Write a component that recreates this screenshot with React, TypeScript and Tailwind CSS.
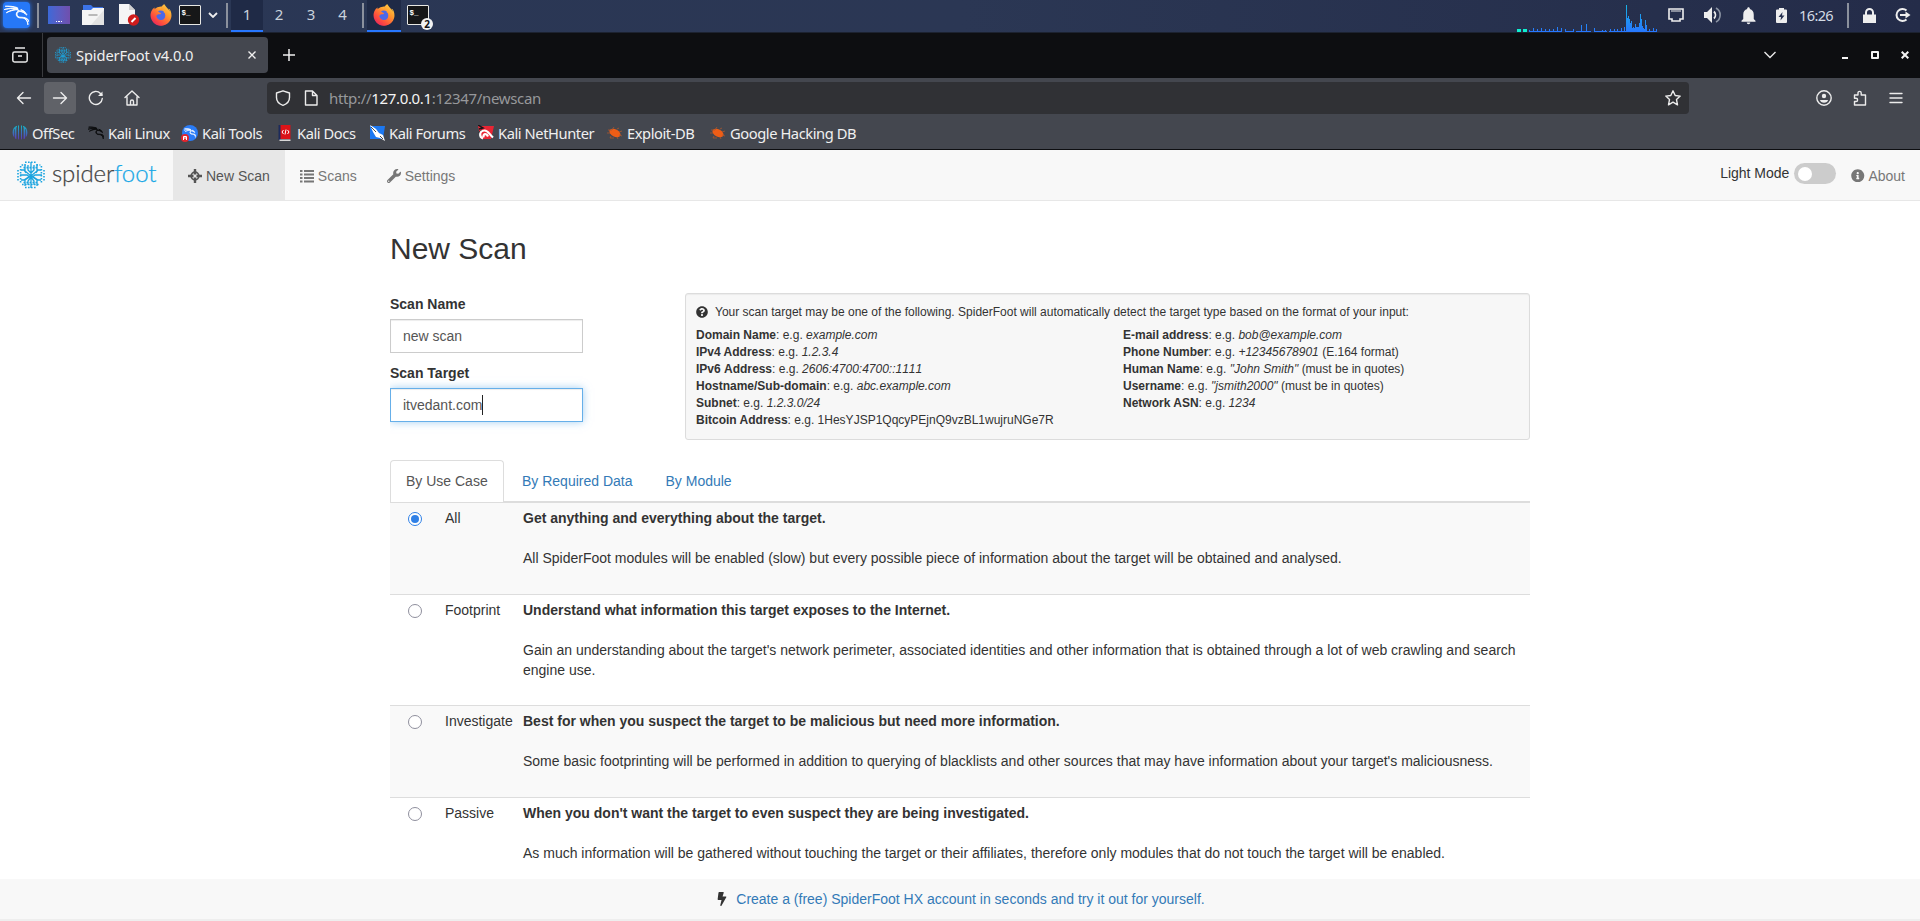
import type { ReactNode } from "react";
import { FaBolt, FaFirefoxBrowser, FaInfoCircle, FaQuestionCircle, FaWrench } from "react-icons/fa";
import { MdNotifications } from "react-icons/md";
import { SiKalilinux } from "react-icons/si";

const bookmarks = [
  { name: "OffSec", icon: "offsec", item: "w-[76px]", label: "w-[44px]" },
  { name: "Kali Linux", icon: "linux", item: "w-[94px]", label: "w-[61px]" },
  { name: "Kali Tools", icon: "tools", item: "w-[95px]", label: "w-[63px]" },
  { name: "Kali Docs", icon: "docs", item: "w-[92px]", label: "w-[60px]" },
  { name: "Kali Forums", icon: "forums", item: "w-[109px]", label: "w-[77px]" },
  { name: "Kali NetHunter", icon: "nethunter", item: "w-[129px]", label: "w-[97px]" },
  { name: "Exploit-DB", icon: "bug", item: "w-[103px]", label: "w-[71px]" },
  { name: "Google Hacking DB", icon: "bug", item: "w-[150px]", label: "w-[126px]" },
];

const useCases = [
  {
    name: "All",
    title: "Get anything and everything about the target.",
    text: "All SpiderFoot modules will be enabled (slow) but every possible piece of information about the target will be obtained and analysed.",
    row: "h-[92px] bg-[#f9f9f9]",
    checked: true,
  },
  {
    name: "Footprint",
    title: "Understand what information this target exposes to the Internet.",
    text: "Gain an understanding about the target's network perimeter, associated identities and other information that is obtained through a lot of web crawling and search engine use.",
    row: "h-[111px]",
    checked: false,
  },
  {
    name: "Investigate",
    title: "Best for when you suspect the target to be malicious but need more information.",
    text: "Some basic footprinting will be performed in addition to querying of blacklists and other sources that may have information about your target's maliciousness.",
    row: "h-[92px] bg-[#f9f9f9]",
    checked: false,
  },
  {
    name: "Passive",
    title: "When you don't want the target to even suspect they are being investigated.",
    text: "As much information will be gathered without touching the target or their affiliates, therefore only modules that do not touch the target will be enabled.",
    row: "h-[92px]",
    checked: false,
  },
];

// [x, height] of every bar in the cpu graph
const cpuBars = [
  [48, 2], [52, 4], [56, 3], [60, 4], [64, 3], [68, 3], [72, 3], [76, 5], [80, 4], [84, 3], [92, 3], [100, 7],
  [105, 8], [113, 4], [121, 2], [124, 2], [129, 3], [133, 3], [136, 3], [140, 4], [143, 5], [145, 27], [146, 14],
  [147, 16], [148, 13], [149, 9], [150, 11], [151, 4], [152, 5], [153, 4], [154, 8], [155, 5], [156, 5], [157, 5],
  [158, 9], [159, 18], [160, 13], [161, 6], [162, 4], [163, 3], [164, 12], [165, 7], [168, 3], [172, 4], [175, 3],
];

function Firefox() {
  return (
    <span className="relative block size-[22px]">
      <svg viewBox="0 0 22 22" className="absolute inset-0">
        <defs>
          <linearGradient id="fox" x1="1" y1="0" x2="0.2" y2="1">
            <stop offset="0" stopColor="#ffe14d" />
            <stop offset="0.4" stopColor="#ff9a2e" />
            <stop offset="0.75" stopColor="#ff4f3d" />
            <stop offset="1" stopColor="#e8255e" />
          </linearGradient>
        </defs>
        <circle cx="11" cy="12" r="9.5" fill="url(#fox)" />
        <circle cx="10.8" cy="11.6" r="5" fill="#4b68e8" />
      </svg>
      <FaFirefoxBrowser className="absolute inset-0 size-[22px] [&_path]:fill-[url(#fox)]" />
    </span>
  );
}

function Terminal() {
  return (
    <svg viewBox="0 0 22 20" className="h-5 w-[22px]">
      <rect x="0.5" y="0.5" width="21" height="19" rx="0.5" fill="#161718" stroke="#e8e8e4" />
      <text x="2.5" y="9.5" fill="#fff" fontSize="7.5" fontWeight="700" fontFamily="Liberation Mono, monospace">
        $_
      </text>
    </svg>
  );
}

// Circuit-like brain used as logo and favicon
function SpiderLogo({ className }: { className: string }) {
  return (
    <svg viewBox="0 0 28 28" className={className} fill="none" stroke="#1ba4df">
      <g strokeWidth="1.3">
        <path d="M14 1v26M11 4v5l3 3 3-3V4M8 3v7l6 5 6-5V3M4 9h3l2 3M24 9h-3l-2 3M3 14h7l4 3 4-3h7M4 19h3l6-4M24 19h-3l-6-4M8 25v-6l6-4 6 4v6M11 24v-4l3-4 3 4v4" />
      </g>
      <g strokeWidth="1.6" strokeDasharray="1.6 1.4">
        <path d="M8 1.2h12M4.6 4h4M19.4 4h4M1 9v11M27 9v11M3.6 5v18M24.4 5v18M5 23.5h18M8 26.5h12M6.5 6.6h15M6.5 21.5h15" />
      </g>
    </svg>
  );
}

function BookmarkIcon({ icon }: { icon: string }) {
  switch (icon) {
    case "offsec":
      return (
        <svg viewBox="0 0 16 16" className="size-4">
          <defs>
            <linearGradient id="off" x1="0" y1="0" x2="0" y2="1">
              <stop offset="0" stopColor="#15b5c6" />
              <stop offset="1" stopColor="#6130b8" />
            </linearGradient>
          </defs>
          <path
            fill="url(#off)"
            d="M5 .8C2 1.8.6 4.5.6 7.4c0 2.3.8 4 1.7 5V4.5L3 4v9.4l1.400.7V2.500L5 2zM7 .5H6v13l1 1.500zM9 .5h1v13L9 15zM11 .8c3 1 4.4 3.7 4.4 6.600 0 2.300-.8 4-1.7 5V4.500L13 4v9.400l-1.400.7V2.500L11 2z"
          />
        </svg>
      );
    case "linux":
      return <SiKalilinux className="size-4 stroke-[#0b0c0e] stroke-[1.2] text-[#0b0c0e]" />;
    case "tools":
      return (
        <span className="relative block size-4 rounded-full bg-[#2a7cf7]">
          <SiKalilinux className="absolute top-0.5 left-0.5 size-3 stroke-white stroke-1 text-white" />
          <svg viewBox="0 0 8 8" className="absolute -bottom-px -left-px size-2">
            <circle cx="4" cy="4" r="4" fill="#e3262d" />
            <path d="M2.500 6V2.500h3V6M4 2.500V5" stroke="#fff" fill="none" />
          </svg>
        </span>
      );
    case "docs":
      return (
        <svg viewBox="0 0 14 16" className="ml-px h-4 w-[15px]">
          <path d="M0 0h3v15H0z" fill="#1c2b5c" />
          <path d="M2 0h10v14H2z" fill="#db1318" />
          <path d="M1 14.500h11v1.500H1z" fill="#d8d8d8" />
          <path d="M5 5 3.500 7 5 9M9 5l1.500 2L9 9M7.500 4.500l-1 5" stroke="#fff" fill="none" />
        </svg>
      );
    case "forums":
      return (
        <svg viewBox="0 0 16 16" className="size-4">
          <path d="M1 1h15l-2 13H1z" fill="#1c78f2" />
          <path d="m1 0 6 4 3 4 4 2 2 6-5-3-4-1-3-5z" fill="#fff" />
          <path d="m2 2 5 5M11 11l3 3" stroke="#222" strokeWidth="0.8" />
        </svg>
      );
    case "nethunter":
      return (
        <svg viewBox="0 0 16 16" className="size-4">
          <path d="M0 1h16l-3 13H3z" fill="#e92534" />
          <path d="m0 0 5 3-4 1M1 8l3-3" stroke="#16171a" strokeWidth="1.5" fill="none" />
          <path
            d="M5 13.500C1 12 1 6 6.500 5.500 10 5.300 11 9 15 12.500M5.500 12.500c-.5-4 3-4.500 4.500-1"
            stroke="#fff"
            strokeWidth="2.2"
            fill="none"
          />
        </svg>
      );
    default:
      return (
        <svg viewBox="0 0 16 16" className="size-4">
          <ellipse cx="8" cy="8" rx="6" ry="3.7" transform="rotate(28 8 8)" fill="#ee5d16" />
          <path d="M1 5h4l2-3M0 8h3M4 11l-1 2h4M10 12l1 2M10 4l2-1M12 7l3-1M12 10l3 1" stroke="#a8572f" strokeWidth="0.8" fill="none" />
        </svg>
      );
  }
}

function Divider() {
  return <div className="h-[25px] w-0.5 bg-[#8b919d]" />;
}

function Panel() {
  return (
    <div className="flex h-[33px] items-center border-b border-[#1c2230] bg-linear-to-r from-[#2a3755] via-[#2b3754] to-[#242c49] pb-0.5 font-['Noto_Sans',sans-serif]">
      <div className="ml-[3px] flex h-[26px] w-[27px] items-center justify-center rounded-sm bg-[#2678f8] shadow-[0_0_4px_#2678f8]">
        <SiKalilinux className="size-[25px] stroke-white stroke-[0.9] text-white" />
      </div>
      <div className="ml-[7px]">
        <Divider />
      </div>
      <div className="ml-[9px] flex h-[18px] w-[22px] items-end justify-center gap-px bg-linear-to-r from-[#3b69d8] to-[#704fad] pb-0.5">
        <i className="h-px w-[1.5px] bg-white" />
        <i className="h-px w-[1.5px] bg-white" />
        <i className="h-px w-[1.5px] bg-white" />
      </div>
      <svg viewBox="0 0 22 20" className="ml-3 h-5 w-[22px]">
        <path d="M1 0h8l2 2h10v6H1z" fill="#3c73e6" />
        <path d="M0 5h9l2-2h11v17H0z" fill="#f4f4f4" />
        <path d="M22 5v15H9z" fill="#e2e2e2" />
        <path d="M6.500 10h9" stroke="#aaa" strokeWidth="1.6" />
      </svg>
      <svg viewBox="0 0 22 22" className="ml-[14px] size-[22px]">
        <path d="M1 0h10l6 6v14H1z" fill="#f5f5f5" />
        <path d="M11 0v6h6z" fill="#d0d0d0" />
        <circle cx="15.5" cy="16" r="5.7" fill="#d01c1c" />
        <path d="m13.500 18 4-4" stroke="#fff" strokeWidth="2" />
      </svg>
      <div className="ml-2.5">
        <Firefox />
      </div>
      <div className="ml-[7px]">
        <Terminal />
      </div>
      <svg viewBox="0 0 10 6" className="ml-[7px] h-1.5 w-2.5" fill="none" stroke="#eee" strokeWidth="1.8">
        <path d="m1 1 4 4 4-4" />
      </svg>
      <div className="ml-2">
        <Divider />
      </div>
      <div className="ml-[3px] flex h-8 self-start text-[15px] leading-[29px] text-[#c9d2dc]">
        <div className="w-8 border-b-2 border-[#2777ff] bg-[#1f2a46] text-center">1</div>
        <div className="w-8 text-center">2</div>
        <div className="w-8 text-center">3</div>
        <div className="w-[31px] text-center">4</div>
      </div>
      <div className="ml-1">
        <Divider />
      </div>
      <div className="ml-[3px] flex h-8 w-[34px] items-center justify-center self-start border-b-2 border-[#2777ff] bg-[#1f2a46]">
        <Firefox />
      </div>
      <div className="relative ml-1.5">
        <Terminal />
        <span className="absolute top-[13px] left-[14px] size-3 rounded-full bg-[#f2f2f2] text-center text-[10px] leading-3 font-bold text-[#111]">
          2
        </span>
      </div>
      <svg viewBox="36 0 140 32" className="ml-auto h-8 w-[140px] self-start" shapeRendering="crispEdges">
        <defs>
          <linearGradient id="cpu" gradientUnits="userSpaceOnUse" x1="0" y1="4" x2="0" y2="32">
            <stop offset="0" stopColor="#17b6e5" />
            <stop offset="1" stopColor="#2777ff" />
          </linearGradient>
        </defs>
        <path d="M36 29h4v3h-4zM42 29h4v3h-4z" fill="#0ff0d0" />
        <path d="M49 31h32v1H49zM84 31h9v1h-9zM95 31h15v1H95zM114 31h12v1h-12zM128 31h48v1h-48z" fill="#2777ff" />
        {cpuBars.map(([x, h]) => (
          <rect key={x} x={x} y={32 - h} width="1" height={h} fill="url(#cpu)" />
        ))}
      </svg>
      <svg viewBox="0 0 16 14" className="ml-[11px] h-3.5 w-4" fill="none" stroke="#eee">
        <path d="M1 1h14v10h-3v2H4v-2H1z" strokeWidth="1.6" />
        <path d="M4 2v2M6 2v2M8 2v2M10 2v2M12 2v2" />
      </svg>
      <svg viewBox="0 0 17 16" className="ml-5 h-4 w-[17px]" fill="none">
        <path d="M0 5h3l5-5v16l-5-5H0z" fill="#eee" />
        <path d="M10 4.500a5 5 0 0 1 0 7" stroke="#eee" strokeWidth="1.8" />
        <path d="M12 1a8 8 0 0 1 0 14" stroke="#8b93a3" strokeWidth="1.6" />
      </svg>
      <MdNotifications className="ml-[17px] size-[21px] text-[#eee]" />
      <svg viewBox="0 0 11 15" className="ml-[17px] h-[15px] w-[11px]">
        <path d="M3 0h5v1.500h2q1 0 1 1V14q0 1-1 1H1q-1 0-1-1V2.500q0-1 1-1h2z" fill="#eee" />
        <path d="M6.500 4 2.500 9h2.500L4.500 12.500l4-5H6z" fill="#2a3452" />
      </svg>
      <div className="ml-3 w-9 text-[14.5px] tracking-[-0.6px] whitespace-nowrap text-[#d3dbe5]">16:26</div>
      <div className="ml-3">
        <Divider />
      </div>
      <svg viewBox="0 0 13 15" className="ml-[14px] h-[15px] w-[13px]">
        <path d="M0 6.500h13V15H0z" fill="#eee" />
        <path d="M3 7V4.500a3.500 3.500 0 0 1 7 0V7" fill="none" stroke="#eee" strokeWidth="2" />
      </svg>
      <svg viewBox="0 0 17 16" className="mr-[9px] ml-[18px] h-4 w-[17px]" fill="none" stroke="#eee" strokeWidth="2">
        <path d="M12.500 3.500A6 6 0 1 0 12.500 12.500" />
        <path d="M6 8h6" />
        <path d="m11.500 4.500 5 3.500-5 3.500z" fill="#eee" stroke="none" />
      </svg>
    </div>
  );
}

function TabBar() {
  return (
    <div className="flex h-[45px] items-center bg-[#0d0e11] pb-px text-[#f0f0f0]">
      <svg viewBox="0 0 16 16" className="ml-3 size-4" fill="none" stroke="#e8e8e8" strokeWidth="1.5">
        <path d="M3 1h10M2.500 5h11a1.700 1.700 0 0 1 1.700 1.700v6.600a1.700 1.700 0 0 1-1.700 1.700h-11A1.700 1.700 0 0 1 .8 13.300V6.700A1.700 1.700 0 0 1 2.500 5zM6 9h4" />
      </svg>
      <div className="ml-[14px] h-full w-px bg-[#3a3b3f]" />
      <div className="ml-1 flex h-9 w-[221px] items-center rounded bg-[#44474f]">
        <SpiderLogo className="ml-2 size-4" />
        <span className="ml-[5px] w-[117px] font-['Noto_Sans',sans-serif] text-[14.7px] tracking-[-0.12px] whitespace-nowrap">
          SpiderFoot v4.0.0
        </span>
        <svg viewBox="0 0 8 8" className="mr-3 ml-auto size-2" stroke="#f0f0f0" strokeWidth="1.4">
          <path d="m.5.5 7 7M7.500.5l-7 7" />
        </svg>
      </div>
      <svg viewBox="0 0 12 12" className="ml-[15px] size-3" stroke="#f0f0f0" strokeWidth="1.5">
        <path d="M6 0v12M0 6h12" />
      </svg>
      <svg viewBox="0 0 12 8" className="ml-auto h-2 w-3" fill="none" stroke="#e8e8e8" strokeWidth="1.4">
        <path d="m.5 1 5.500 5.500L11.500 1" />
      </svg>
      <div className="mt-[5px] ml-[66px] h-0.5 w-1.5 bg-[#f4f4f4]" />
      <div className="ml-[23px] size-2 rounded-[1px] border-[2.5px] border-[#f4f4f4]" />
      <svg viewBox="0 0 8 8" className="mr-[11px] ml-[22px] size-2" stroke="#f4f4f4" strokeWidth="2">
        <path d="m.7.7 6.600 6.600M7.300.7.7 7.300" />
      </svg>
    </div>
  );
}

function ToolIcon({ children, className = "" }: { children: ReactNode; className?: string }) {
  return (
    <svg viewBox="0 0 16 16" className={`size-4 ${className}`} fill="none" stroke="#ececec" strokeWidth="1.4" strokeLinecap="round" strokeLinejoin="round">
      {children}
    </svg>
  );
}

function Toolbar() {
  return (
    <div className="flex h-10 items-center bg-[#44474f] font-['Noto_Sans',sans-serif]">
      <ToolIcon className="ml-4">
        <path d="M14.500 8H1.500M7 2.500 1.500 8 7 13.500" />
      </ToolIcon>
      <div className="ml-3 flex size-8 items-center justify-center rounded bg-[#606268]">
        <ToolIcon>
          <path d="M1.500 8h13M9 2.500 14.500 8 9 13.500" />
        </ToolIcon>
      </div>
      <ToolIcon className="ml-3">
        <path d="M14.300 8.500A6.500 6.500 0 1 1 12.500 3.400l1.500 1.600" />
        <path d="M14.500 1.500V6H10z" fill="#ececec" stroke="none" />
      </ToolIcon>
      <ToolIcon className="ml-5">
        <path d="M1 7.500 8 1l7 6.500M3 6.500V15h10V6.500M6.500 15v-3.500a1.500 1.500 0 0 1 3 0V15" />
      </ToolIcon>
      <div className="ml-[127px] flex h-8 w-[1422px] items-center rounded bg-[#303135]">
        <ToolIcon className="ml-2">
          <path d="M8 .8 14.500 3v4.500C14.500 11 12 14 8 15.300 4 14 1.500 11 1.500 7.500V3z" />
        </ToolIcon>
        <ToolIcon className="ml-3">
          <path d="M2.500 1h7L14 5.500V15H2.500zM9.500 1v4.500H14" />
        </ToolIcon>
        <div className="ml-2.5 text-[15px] tracking-[-0.33px] whitespace-nowrap text-[#97989b]">
          http://<span className="text-[#f4f4f4]">127.0.0.1</span>:12347/newscan
        </div>
        <ToolIcon className="mr-2 ml-auto">
          <path d="m8 .8 2.200 4.700 5 .6-3.700 3.500 1 5.200L8 12.200l-4.500 2.600 1-5.200L.8 6.100l5-.6z" />
        </ToolIcon>
      </div>
      <ToolIcon className="ml-auto">
        <circle cx="8" cy="8" r="7.2" />
        <circle cx="8" cy="6" r="2.2" fill="#ececec" stroke="none" />
        <path d="M4 10h8c0 1.500-2 2.700-4 2.700S4 11.500 4 10z" fill="#ececec" stroke="none" />
      </ToolIcon>
      <ToolIcon className="ml-5">
        <path d="M2.500 5h3.500V3a1.600 1.600 0 0 1 3.200 0v2h4.300v10H2.500v-3.500h1.500a1.600 1.600 0 0 0 0-3.200H2.500z" />
      </ToolIcon>
      <ToolIcon className="mr-4 ml-5">
        <path d="M2 3.500h12M2 8h12M2 12.500h12" />
      </ToolIcon>
    </div>
  );
}

function Bookmarks() {
  return (
    <div className="flex h-8 items-center border-b border-[#0d0e11] bg-[#44474f] pb-0.5 pl-3 font-['Noto_Sans',sans-serif] text-[14.7px] tracking-[-0.43px] text-[#f0f0f0]">
      {bookmarks.map((b) => (
        <div key={b.name} className={`flex items-center gap-1 ${b.item}`}>
          <BookmarkIcon icon={b.icon} />
          <span className={`whitespace-nowrap ${b.label}`}>{b.name}</span>
        </div>
      ))}
    </div>
  );
}

function Navbar() {
  return (
    <div className="flex h-[51px] border-b border-[#e7e7e7] bg-[#f8f8f8] text-[#777]">
      <div className="flex w-[173px] items-center pl-[17px]">
        <SpiderLogo className="size-[28px]" />
        <span className="-mt-1 ml-[7px] font-[Lato,sans-serif] text-[24px] leading-none font-light tracking-[-0.12px] text-[#444] [-webkit-text-stroke:0.25px]">
          spider<span className="text-[#1ba8e6]">foot</span>
        </span>
      </div>
      <div className="flex items-center gap-1 bg-[#e7e7e7] px-[15px] pt-px text-[#555]">
        <svg viewBox="0 0 14 14" className="size-3.5" fill="none" stroke="#555" strokeWidth="1.7">
          <circle cx="7" cy="7" r="3.8" />
          <path d="M7 0v5.500M7 8.500V14M0 7h5.500M8.500 7H14" strokeWidth="2.4" />
        </svg>
        New Scan
      </div>
      <div className="flex items-center gap-1 px-[15px] pt-px">
        <svg viewBox="0 0 14 14" className="size-3.5" fill="#777">
          <path d="M0 1h2.500v2H0zM0 4.500h2.500v2H0zM0 8h2.500v2H0zM0 11.500h2.500v2H0zM4 1h10v2H4zM4 4.500h10v2H4zM4 8h10v2H4zM4 11.500h10v2H4z" />
        </svg>
        Scans
      </div>
      <div className="flex items-center gap-1 px-[15px] pt-px">
        <FaWrench className="size-3.5" />
        Settings
      </div>
      <div className="ml-auto flex items-center pt-px">
        <span className="-mt-1.5 text-[#333]">Light Mode</span>
        <div className="-mt-1 ml-[5px] flex h-[21px] w-[42px] items-center rounded-full bg-[#ccc] pl-1">
          <div className="size-3.5 rounded-full bg-white" />
        </div>
        <FaInfoCircle className="ml-[15px] size-[13.5px]" />
        <span className="mr-[15px] ml-[3.5px]">About</span>
      </div>
    </div>
  );
}

function Hint({ name, value, after = "", plain = false }: { name: string; value: string; after?: string; plain?: boolean }) {
  return (
    <div>
      <b>{name}</b>: e.g. {plain ? value : <i>{value}</i>} {after}
    </div>
  );
}

function HelpBox() {
  return (
    <div className="mt-[-1px] h-[147px] w-[845px] rounded-[3px] border border-[#dcdcdc] bg-[#f7f7f7] px-2.5 pt-2.5 text-xs leading-[17.14px] shadow-[inset_0_1px_1px_rgba(0,0,0,0.05)]">
      <div className="flex items-center">
        <FaQuestionCircle className="-mt-px size-3" />
        <span className="ml-[7px]">
          Your scan target may be one of the following. SpiderFoot will automatically detect the target type based on the format of your input:
        </span>
      </div>
      <div className="mt-[5.5px] flex">
        <div className="w-[427px]">
          <Hint name="Domain Name" value="example.com" />
          <Hint name="IPv4 Address" value="1.2.3.4" />
          <div className="[font-kerning:none]">
            <Hint name="IPv6 Address" value="2606:4700:4700::1111" />
          </div>
          <Hint name="Hostname/Sub-domain" value="abc.example.com" />
          <Hint name="Subnet" value="1.2.3.0/24" />
          <Hint name="Bitcoin Address" value="1HesYJSP1QqcyPEjnQ9vzBL1wujruNGe7R" plain />
        </div>
        <div>
          <Hint name="E-mail address" value="bob@example.com" />
          <Hint name="Phone Number" value="+12345678901" after="(E.164 format)" />
          <Hint name="Human Name" value={'"John Smith"'} after="(must be in quotes)" />
          <Hint name="Username" value={'"jsmith2000"'} after="(must be in quotes)" />
          <Hint name="Network ASN" value="1234" />
        </div>
      </div>
    </div>
  );
}

function Radio({ checked }: { checked: boolean }) {
  if (checked) {
    return (
      <div className="flex size-3.5 items-center justify-center rounded-full border border-[#2f80e6] bg-white">
        <div className="size-2 rounded-full bg-[#2f80e6]" />
      </div>
    );
  }
  return <div className="size-3.5 rounded-full border border-[#8f8f9d] bg-white" />;
}

export default function App() {
  return (
    <div className="flex h-[921px] w-[1920px] flex-col overflow-hidden bg-white font-['Liberation_Sans',Arial,sans-serif] text-sm leading-5 text-[#333]">
      <Panel />
      <TabBar />
      <Toolbar />
      <Bookmarks />
      <Navbar />

      <div className="mx-auto h-[678px] w-[1140px] overflow-hidden">
        <h2 className="mt-[31px] text-[30px] leading-[33px]">New Scan</h2>
        <div className="mt-[29px] flex justify-between">
          <div className="w-[193px]">
            <div className="mb-[5px] font-bold">Scan Name</div>
            <div className="flex h-[34px] items-center border border-[#ccc] px-3 text-[#555] shadow-[inset_0_1px_1px_rgba(0,0,0,0.075)]">
              new scan
            </div>
            <div className="mt-2.5 mb-[5px] font-bold">Scan Target</div>
            <div className="flex h-[34px] items-center border border-[#66afe9] px-3 text-[#555] shadow-[inset_0_1px_1px_rgba(0,0,0,0.075),0_0_8px_rgba(102,175,233,0.6)]">
              itvedant.com
              <span className="h-5 w-px bg-[#222]" />
            </div>
          </div>
          <HelpBox />
        </div>

        <div className="mt-5 flex h-[42px] items-end border-b border-[#ddd]">
          <div className="-mb-px h-[42px] w-[114px] rounded-t border border-b-0 border-[#ddd] bg-white px-[15px] pt-[10px] text-[#555]">
            By Use Case
          </div>
          <div className="h-[41px] px-[18px] pt-[11px] text-[#337ab7]">By Required Data</div>
          <div className="h-[41px] pt-[11px] pl-[15px] text-[#337ab7]">By Module</div>
        </div>
        {useCases.map((u) => (
          <div key={u.name} className={`flex border-t border-[#ddd] pt-[5px] ${u.row}`}>
            <div className="w-[55px] pt-1 pl-[18px]">
              <Radio checked={u.checked} />
            </div>
            <div className="w-[78px]">{u.name}</div>
            <div className="w-[1002px]">
              <div className="font-bold">{u.title}</div>
              <div className="mt-5">{u.text}</div>
            </div>
          </div>
        ))}
      </div>

      <div className="flex h-[42px] items-center justify-center border-b-2 border-[#eee] bg-[#f8f8f8]">
        <FaBolt className="size-3.5" />
        <span className="ml-[7px] text-[#337ab7]">Create a (free) SpiderFoot HX account in seconds and try it out for yourself.</span>
      </div>
    </div>
  );
}
